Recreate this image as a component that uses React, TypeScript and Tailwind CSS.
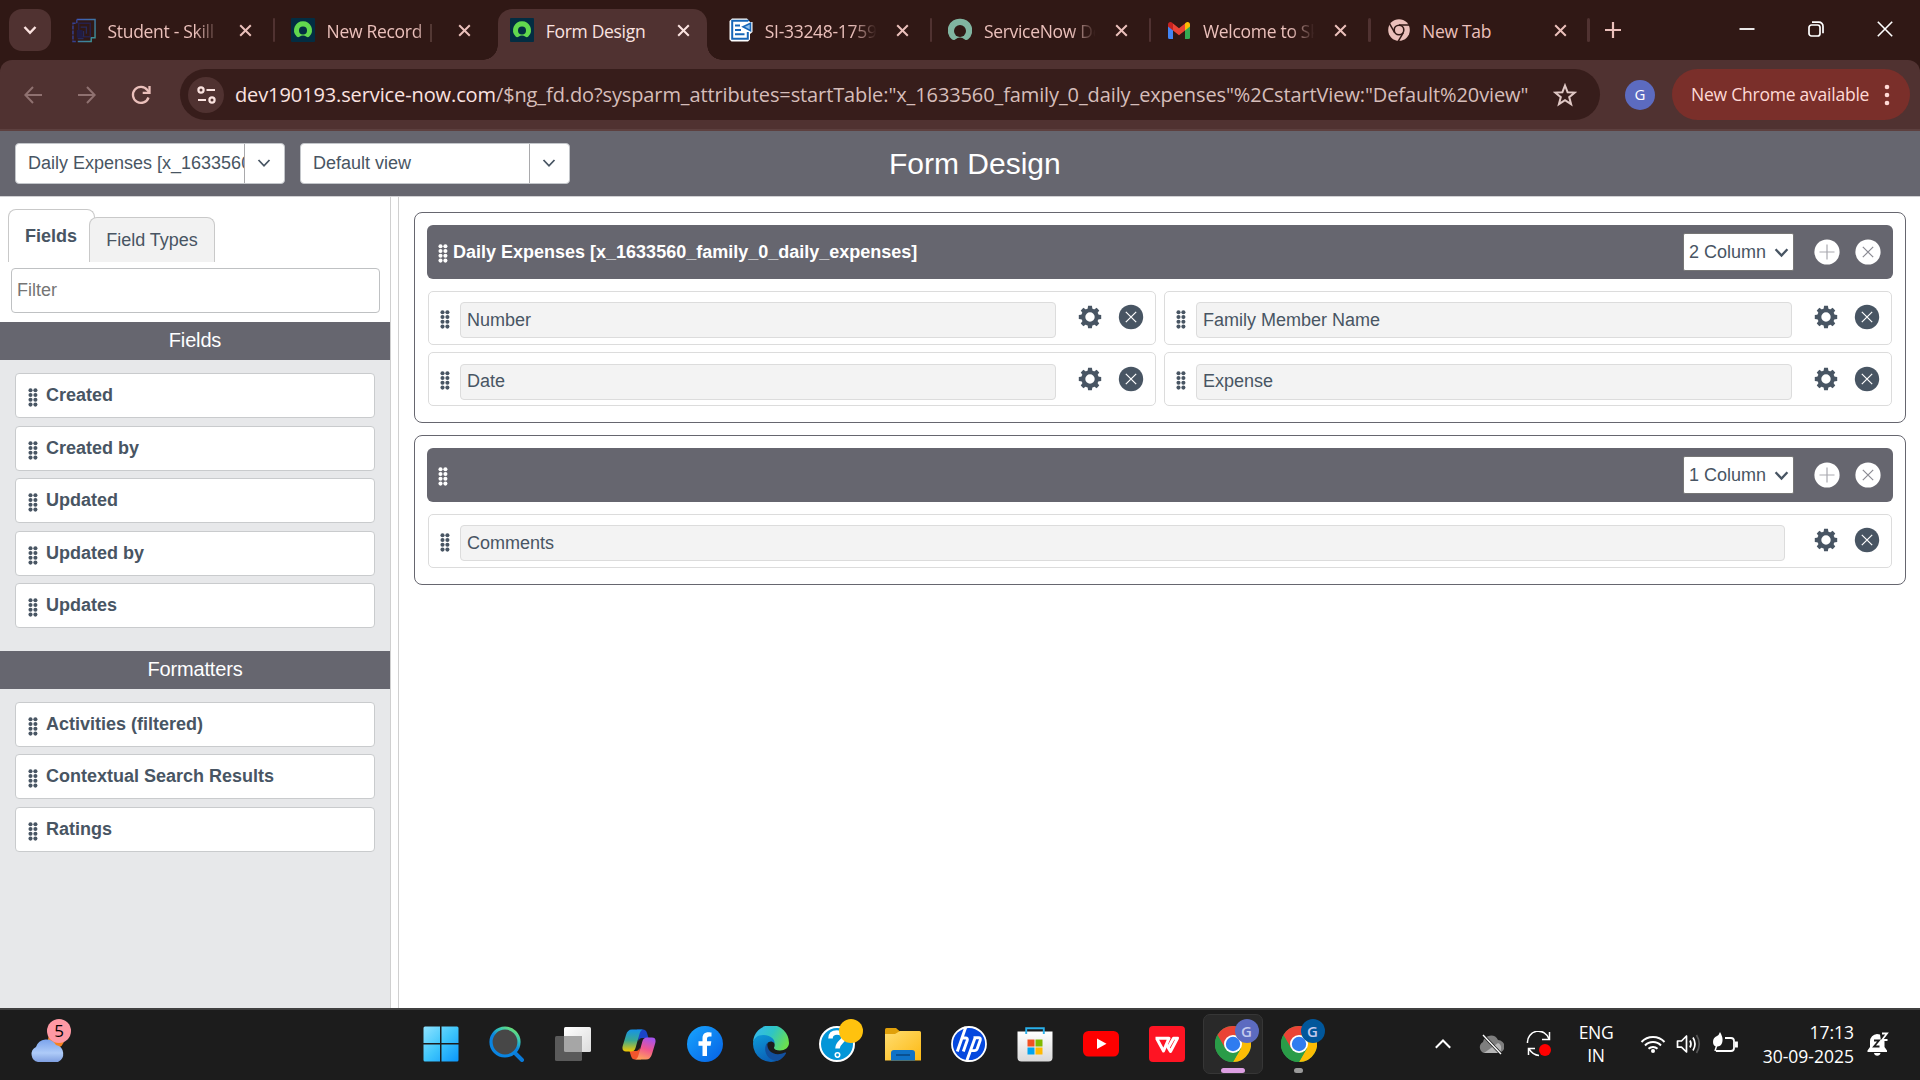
import React from "react";

const UI = "font-['Open_Sans','Noto_Sans',sans-serif]";

function DragHandle({ className = "" }: { className?: string }) {
  return (
    <svg width="10" height="19" viewBox="0 0 10 19" fill="currentColor" className={"shrink-0 " + className}>
      {[2.2, 7, 11.8, 16.6].map((y) => (
        <g key={y}>
          <circle cx="2.5" cy={y} r="2.05" />
          <circle cx="7.4" cy={y} r="2.05" />
        </g>
      ))}
    </svg>
  );
}

function Chevron({ size = 14, stroke = 2 }: { size?: number; stroke?: number }) {
  return (
    <svg width={size} height={size} viewBox="0 0 14 14" fill="none" stroke="currentColor" strokeWidth={stroke}>
      <path d="M1.5 4 7 9.8 12.5 4" />
    </svg>
  );
}

function Gear() {
  return (
    <svg width="24" height="24" viewBox="-12 -12 24 24" className="shrink-0 text-[#485563]">
      <circle r="6.7" fill="none" stroke="currentColor" strokeWidth="4" />
      {[0, 45, 90, 135, 180, 225, 270, 315].map((a) => (
        <path key={a} d="M-2.5 -7.5 L-1.9 -11.2 H1.9 L2.5 -7.5Z" fill="currentColor" transform={`rotate(${a})`} />
      ))}
    </svg>
  );
}

function RemoveIcon({ light = false }: { light?: boolean }) {
  return (
    <svg width="26" height="26" viewBox="-13 -13 26 26" className="shrink-0">
      <circle r={light ? 12.6 : 12.2} fill={light ? "#fff" : "#485563"} />
      <path d="M-5.2 -5.2 5.2 5.2M5.2 -5.2-5.2 5.2" stroke={light ? "#8b8b93" : "#fff"} strokeWidth="1.2" />
    </svg>
  );
}

function AddIcon() {
  return (
    <svg width="26" height="26" viewBox="-13 -13 26 26" className="shrink-0">
      <circle r="12.6" fill="#fff" />
      <path d="M-7.5 0H7.5M0 -7.5V7.5" stroke="#a9a9b0" strokeWidth="1.2" />
    </svg>
  );
}

function ServiceNowFavicon() {
  return (
    <svg width="24" height="24" viewBox="0 0 24 24">
      <rect width="24" height="24" rx="1" fill="#032d42" />
      <path d="M12 3.2a9 9 0 0 0-6.300 15.400c.8.8 1.900.9 2.800.2a5.600 5.600 0 0 1 7 0c.9.7 2 .6 2.800-.2A9 9 0 0 0 12 3.200Z" fill="#62d84e" />
      <circle cx="12" cy="12.600" r="4" fill="#032d42" />
    </svg>
  );
}

function ServiceNowPlain() {
  return (
    <svg width="24" height="24" viewBox="0 0 24 24">
      <path d="M12 .8A11.600 11.600 0 0 0 3.800 21.200c1 .9 2.400 1 3.400.2a7.600 7.600 0 0 1 9.600 0c1 .8 2.400.7 3.400-.2A11.600 11.600 0 0 0 12 .8Z" fill="#81b5a1" />
      <circle cx="12" cy="13" r="6" fill="#301815" />
    </svg>
  );
}

function SkillFavicon() {
  return (
    <svg width="25" height="25" viewBox="0 0 25 25" fill="none">
      <defs>
        <linearGradient id="skill" x1="0" y1="0" x2="1" y2="1">
          <stop offset="0" stopColor="#3f58b8" />
          <stop offset="1" stopColor="#3d9490" />
        </linearGradient>
      </defs>
      <path d="M5 1H24V20H20V24H6" stroke="url(#skill)" strokeWidth="1.500" />
      <path d="M5 1V5H1V24H5" stroke="#35408f" strokeWidth="1.500" strokeDasharray="4 1.200" />
      <path d="M7 5H19V19H7V5Z" stroke="#26204a" strokeWidth="1.500" />
      <path d="M5 12H11V20H5Z" fill="#211c44" />
      <path d="M9 9H15V16M6 21h6M12 13v6" stroke="#262a5c" strokeWidth="1.400" />
    </svg>
  );
}

function DocFavicon() {
  return (
    <svg width="24" height="24" viewBox="0 0 24 24">
      <path d="M3 .5H18L21 4H23.500V14L21 16V21.500L19 23.500H2.500L.5 21.500V3Z" fill="#fff" />
      <path d="M19 3.200V2.800H3.200V20.800H18.800V14" fill="none" stroke="#1767b8" strokeWidth="2" />
      <path d="M6 7.500H11M6 12H12M6 16.300H15.500" stroke="#1767b8" strokeWidth="2" />
      <path d="M21.500 5.200V12.600L14 8.800Z" fill="#8fc0ee" stroke="#1767b8" strokeWidth="1.600" />
    </svg>
  );
}

function GmailFavicon() {
  return (
    <svg width="22" height="17" viewBox="0 0 22 17">
      <path d="M0 2V15.500A1.500 1.500 0 0 0 1.500 17H5V7.500L0 3.500Z" fill="#4285f4" />
      <path d="M17 17h3.500a1.500 1.500 0 0 0 1.500-1.500V2L17 7Z" fill="#34a853" />
      <path d="M17 1.500V8.500L22 4.500V2.400C22 .2 19.500-.7 18 .6Z" fill="#fbbc04" />
      <path d="M5 8.500V1.500L11 6.200 17 1.500V8.500L11 13.200Z" fill="#ea4335" />
      <path d="M0 2.400V4.500L5 8.500V1.500L4 .6C2.400-.7 0 .2 0 2.400Z" fill="#c5221f" />
    </svg>
  );
}

function ChromeMono() {
  return (
    <svg width="22" height="22" viewBox="-11 -11 22 22">
      <circle r="10.800" fill="#ebc0bb" />
      <circle r="5.600" fill="#301815" />
      <circle r="4" fill="#ebc0bb" />
      {[0, 120, 240].map((a) => (
        <path key={a} d="M0 -5H10" stroke="#301815" strokeWidth="1.500" transform={`rotate(${a})`} />
      ))}
    </svg>
  );
}

function CloseX() {
  return (
    <svg width="13" height="13" viewBox="0 0 13 13" stroke="currentColor" strokeWidth="2" className="absolute left-[184px] top-6">
      <path d="M1.200 1.200 11.800 11.800M11.800 1.200 1.200 11.800" />
    </svg>
  );
}

type Tab = { title: string; icon: React.ReactNode; active?: boolean; divider?: boolean; fade?: boolean };

const tabs: Tab[] = [
  { title: "Student - Skill", icon: <SkillFavicon />, divider: true, fade: true },
  { title: "New Record | F", icon: <ServiceNowFavicon />, fade: true },
  { title: "Form Design", icon: <ServiceNowFavicon />, active: true },
  { title: "SI-33248-1759", icon: <DocFavicon />, divider: true, fade: true },
  { title: "ServiceNow De", icon: <ServiceNowPlain />, divider: true, fade: true },
  { title: "Welcome to Sk", icon: <GmailFavicon />, divider: true, fade: true },
  { title: "New Tab", icon: <ChromeMono />, divider: true },
];

function BrowserTab({ tab }: { tab: Tab }) {
  return (
    <div className={"relative flex h-[60px] w-[219.100px] shrink-0 items-center " + (tab.active ? "text-[#fbe3e0]" : "text-[#ebc0bb]")}>
      {tab.active && (
        <>
          <div className="absolute bottom-0 left-[5px] right-[5px] top-[9px] rounded-t-[14px] bg-[#503231]" />
          <div className="absolute bottom-0 left-[-10px] size-[15px] bg-[radial-gradient(circle_at_0_0,transparent_14.500px,#503231_15px)]" />
          <div className="absolute bottom-0 right-[-10px] size-[15px] bg-[radial-gradient(circle_at_100%_0,transparent_14.500px,#503231_15px)]" />
        </>
      )}
      <div className="relative ml-[17px] flex w-[24px] items-center justify-center">{tab.icon}</div>
      <div
        className={
          "relative ml-[11.500px] mt-[2px] w-[114px] overflow-hidden whitespace-nowrap text-[17.500px] tracking-[-0.300px] " +
          (tab.fade ? "[mask-image:linear-gradient(to_right,#000_76%,transparent_98%)]" : "")
        }
      >
        {tab.title}
      </div>
      <CloseX />
      {tab.divider && <div className="absolute -right-px top-[18px] h-6 w-[2.500px] rounded bg-[#503231]" />}
    </div>
  );
}

function TabStrip() {
  return (
    <div className={"flex h-[60px] items-center bg-[#301815] pl-[9px] " + UI}>
      <div className="mr-[4px] flex size-[42px] items-center justify-center rounded-[13px] bg-[#503231] text-[#fbe3e0]">
        <Chevron size={14} stroke={2.4} />
      </div>
      {tabs.map((t) => (
        <BrowserTab key={t.title} tab={t} />
      ))}
      <svg width="16" height="16" viewBox="0 0 16 16" stroke="#ebc0bb" strokeWidth="2.200" className="ml-[16px]">
        <path d="M8 0V16M0 8H16" />
      </svg>
      <div className="ml-auto flex items-center gap-[53px] pb-[2px] pr-[27px] text-white">
        <svg width="16" height="16" viewBox="0 0 16 16" stroke="currentColor" strokeWidth="1.800">
          <path d="M0.500 8H15.500" />
        </svg>
        <svg width="16" height="16" viewBox="0 0 16 16" fill="none" stroke="currentColor" strokeWidth="1.700">
          <rect x="1" y="4" width="11" height="11" rx="2.500" />
          <path d="M4 1.200h7a4 4 0 0 1 4 4v7" />
        </svg>
        <svg width="16" height="16" viewBox="0 0 16 16" stroke="currentColor" strokeWidth="1.600">
          <path d="M.8.8 15.200 15.200M15.200.8.8 15.200" />
        </svg>
      </div>
    </div>
  );
}

function Toolbar() {
  return (
    <div className="bg-[#301815]">
      <div className={"flex h-[71px] items-center rounded-t-[12px] border-b-2 border-[#5d403f] bg-[#503231] pl-[24px] pr-[10px] " + UI}>
        <svg width="18" height="18" viewBox="0 0 18 18" fill="none" stroke="#8f7170" strokeWidth="2">
          <path d="M18 9H1.500M9 1 1.300 9 9 17" />
        </svg>
        <svg width="18" height="18" viewBox="0 0 18 18" fill="none" stroke="#8f7170" strokeWidth="2" className="ml-9">
          <path d="M0 9H16.500M9 1 16.700 9 9 17" />
        </svg>
        <svg width="20" height="20" viewBox="0 0 20 20" fill="none" stroke="#ebc0bb" strokeWidth="2.300" className="ml-[35px]">
          <path d="M17.500 12.500A8 8 0 1 1 16.300 5L18.200 7.200" />
          <path d="M18.500 1V7.800H11.700" />
        </svg>
        <div className="ml-[29px] flex h-[51px] w-[1420px] items-center rounded-full bg-[#371d1b] pl-2 pr-[23px]">
          <div className="flex size-9 shrink-0 items-center justify-center rounded-full bg-[#503231]">
            <svg width="19" height="18" viewBox="0 0 19 18" fill="none" stroke="#fbe3e0" strokeWidth="2.200">
              <circle cx="4" cy="4" r="2.600" />
              <path d="M9.500 4H18M1 14H9" />
              <circle cx="15" cy="14" r="2.600" />
            </svg>
          </div>
          <div className="ml-[11px] w-[1297px] shrink-0 whitespace-nowrap text-[20px] leading-7 tracking-[-0.112px] text-[#d6bdba]">
            <span className="text-[#fbe3e0]">dev190193.service-now.com</span>
            /$ng_fd.do?sysparm_attributes=startTable:"x_1633560_family_0_daily_expenses"%2CstartView:"Default%20view"
          </div>
          <svg width="24" height="24" viewBox="0 0 24 24" fill="none" stroke="#e0c8c5" strokeWidth="2" className="ml-auto shrink-0">
            <path d="M12 2.500 14.600 9.200 21.800 9.600 16.200 14.100 18.100 21.200 12 17.200 5.900 21.200 7.800 14.100 2.200 9.600 9.400 9.200Z" />
          </svg>
        </div>
        <div className="ml-[25px] flex size-[30px] items-center justify-center rounded-full bg-[#5c6bc0] text-[15px] text-white">G</div>
        <div className="ml-auto flex h-[51px] w-[238px] items-center rounded-full bg-[#7a2f2a] pl-[19px] text-[17.500px] text-[#ffdad6]">
          <span className="w-[184px] whitespace-nowrap tracking-[-0.230px]">New Chrome available</span>
          <svg width="6" height="22" viewBox="0 0 6 22" fill="currentColor" className="ml-[9px]">
            <circle cx="3" cy="3" r="2.300" />
            <circle cx="3" cy="11" r="2.300" />
            <circle cx="3" cy="19" r="2.300" />
          </svg>
        </div>
      </div>
    </div>
  );
}

function HeaderSelect({ label }: { label: string }) {
  return (
    <div className="flex h-[41px] w-[270px] rounded-[4px] border border-[#c3c6ca] bg-white text-[#485563]">
      <div className="w-[229px] overflow-hidden whitespace-nowrap border-r border-[#a9a9ac] pl-3 text-[18px] leading-[38px]">{label}</div>
      <div className="flex flex-1 items-center justify-center pb-px pr-px">
        <Chevron size={14} stroke={1.800} />
      </div>
    </div>
  );
}

function AppHeader() {
  return (
    <div className="flex h-[66px] items-center gap-[15px] border-b border-[#d0d0d3] bg-[#66666f] pl-[15px]">
      <HeaderSelect label="Daily Expenses [x_1633560" />
      <HeaderSelect label="Default view" />
      <div className="ml-[304px] text-[30px] leading-none text-white">Form Design</div>
    </div>
  );
}

function SideSection({ title, items }: { title: string; items: string[] }) {
  return (
    <>
      <div className="flex h-[38px] items-center justify-center bg-[#66666f] pb-[2px] text-[20px] tracking-[-0.150px] text-white">{title}</div>
      <div className="flex flex-col gap-[7.500px] px-[15px] pb-[22.500px] pt-[13px]">
        {items.map((item) => (
          <div
            key={item}
            className="flex h-[45px] items-center rounded-[4px] border border-[#c9cbcd] bg-white pl-3 text-[18px] font-bold text-[#485563]"
          >
            <DragHandle className="mt-[4px]" />
            <span className="ml-[8px]">{item}</span>
          </div>
        ))}
      </div>
    </>
  );
}

function Sidebar() {
  return (
    <div className="flex w-[391px] shrink-0 flex-col border-r border-[#d0d0d0] bg-[#e7e8ea] text-[#485563]">
      <div className="h-[125px] bg-white pt-3">
        <div className="flex h-[53px] items-end pl-2 text-[18px]">
          <div className="flex h-[53px] w-[87px] items-center justify-center rounded-t-[8px] border border-b-0 border-[#c9c9c9] bg-white pr-px font-bold">
            Fields
          </div>
          <div className="relative -ml-[6px] flex h-[45px] w-[126px] items-center justify-center rounded-t-[8px] border border-b-0 border-[#c9c9c9] bg-[#f2f2f2]">
            Field Types
          </div>
        </div>
        <div className="mx-[11px] mt-[6px] flex h-[45px] w-[369px] items-center rounded-[4px] border border-[#bfc1c3] pb-px pl-[5px] text-[18px] text-[#757575]">
          Filter
        </div>
      </div>
      <SideSection title="Fields" items={["Created", "Created by", "Updated", "Updated by", "Updates"]} />
      <SideSection title="Formatters" items={["Activities (filtered)", "Contextual Search Results", "Ratings"]} />
    </div>
  );
}

function FieldRow({ label, wide = false, low = false }: { label: string; wide?: boolean; low?: boolean }) {
  return (
    <div className="flex h-[54px] items-start rounded-[5px] border border-[#dcdcdc] bg-white pl-[11px] text-[#485563]">
      <DragHandle className="mt-[18px]" />
      <div
        className={
          "ml-[10px] flex h-9 items-center rounded-[4px] border border-[#dcdcdc] bg-[#f3f3f3] pl-[6px] text-[18px] " +
          (low ? "mt-[11px] pb-[2px] " : "mt-[10px] ") +
          (wide ? "w-[1325px]" : "w-[596px]")
        }
      >
        {label}
      </div>
      <div className={"ml-auto flex items-center gap-[16px] pr-[11px] " + (low ? "mt-[13px]" : "mt-[12px]")}>
        <Gear />
        <RemoveIcon />
      </div>
    </div>
  );
}

function SectionCard({ title, columns, fields }: { title: string; columns: number; fields: string[] }) {
  const two = columns === 2;
  return (
    <div className="rounded-[8px] border border-[#66666f] bg-white px-3 pb-4 pt-3">
      <div className="flex h-[54px] items-center rounded-[6px] bg-[#66666f] pl-[11px] pr-[12px] text-white">
        <DragHandle className="mt-[3px]" />
        <div className="ml-[5px] text-[18px] font-bold">{title}</div>
        <div className="ml-auto flex h-[38px] w-[111px] items-center justify-between rounded-[2px] border border-[#767676] bg-white pl-[5px] pr-[4px] text-[18px] text-[#485563]">
          <span className="whitespace-nowrap">{columns} Column</span>
          <Chevron size={15} stroke={2.2} />
        </div>
        <div className="ml-[20px] flex gap-[15px]">
          <AddIcon />
          <RemoveIcon light />
        </div>
      </div>
      <div className={"mt-3 grid gap-x-2 gap-y-[7px] px-px " + (two ? "grid-cols-2" : "grid-cols-1")}>
        {fields.map((f, i) => (
          <FieldRow key={f} label={f} wide={!two} low={i > 1} />
        ))}
      </div>
    </div>
  );
}

function ChromeIcon() {
  return (
    <svg width="36" height="36" viewBox="-18 -18 36 36">
      <circle r="18" fill="#34a853" />
      <path d="M-15.600 -9A18 18 0 0 1 15.600 -9L0 -9-7.800 4.500Z" fill="#ea4335" />
      <path d="M15.600 -9A18 18 0 0 1 0 18L7.800 4.500 0 -9Z" fill="#fbbc05" />
      <path d="M-15.600 -9-7.800 4.500 0 9 7.800 4.500 0 18A18 18 0 0 1-15.600 -9Z" fill="#2a9c48" />
      <circle r="9" fill="#fff" />
      <circle r="7.200" fill="#2f7cf0" />
    </svg>
  );
}

function WindowsIcon() {
  return (
    <svg width="36" height="36" viewBox="0 0 36 36">
      <defs>
        <linearGradient id="win" x1="0" y1="0" x2="1" y2="1">
          <stop offset="0" stopColor="#8fe3ff" />
          <stop offset=".5" stopColor="#3fc6fb" />
          <stop offset="1" stopColor="#0a96fb" />
        </linearGradient>
      </defs>
      <path d="M2 .5H17V17H.5V2Q.5.5 2 .5ZM18.500.5H34Q35.500.5 35.500 2V17H18.500ZM.5 18.500H17V35.500H2Q.5 35.500.5 34ZM18.500 18.500H35.500V34Q35.500 35.500 34 35.500H18.500Z" fill="url(#win)" />
    </svg>
  );
}

function SearchIcon() {
  return (
    <svg width="36" height="36" viewBox="0 0 36 36" fill="none">
      <defs>
        <linearGradient id="srch" x1=".2" y1="1" x2=".8" y2="0">
          <stop offset=".5" stopColor="#0a84e0" />
          <stop offset=".75" stopColor="#35c5b8" />
          <stop offset="1" stopColor="#6fe070" />
        </linearGradient>
      </defs>
      <path d="M25 26 33 34" stroke="#0a7ad8" strokeWidth="4" strokeLinecap="round" />
      <circle cx="16" cy="16" r="14" fill="#474747" stroke="url(#srch)" strokeWidth="3.200" />
    </svg>
  );
}

function TaskViewIcon() {
  return (
    <svg width="36" height="34" viewBox="0 0 36 34">
      <defs>
        <linearGradient id="tv" x1="0" y1="0" x2="1" y2="1">
          <stop offset="0" stopColor="#ffffff" />
          <stop offset="1" stopColor="#dcdcdc" />
        </linearGradient>
      </defs>
      <rect x="9" y="0" width="27" height="25" rx="1.500" fill="url(#tv)" />
      <rect x="0" y="9" width="27" height="25" rx="1.500" fill="#5a5a5a" />
      <path d="M9 9H27V25H10.500Q9 25 9 23.500Z" fill="#a6a6a6" />
    </svg>
  );
}

function CopilotIcon() {
  return (
    <svg width="34" height="31" viewBox="0 0 34 31">
      <defs>
        <linearGradient id="cp1" x1="0" y1="0" x2="0" y2="1">
          <stop offset="0" stopColor="#1593e8" />
          <stop offset=".5" stopColor="#3aa991" />
          <stop offset="1" stopColor="#f2c800" />
        </linearGradient>
        <linearGradient id="cp2" x1=".6" y1="0" x2=".3" y2="1">
          <stop offset="0" stopColor="#a653ec" />
          <stop offset=".5" stopColor="#f0568e" />
          <stop offset="1" stopColor="#ffa35c" />
        </linearGradient>
      </defs>
      <path d="M15 .5H21Q24 .5 25 4L26.500 9H20Q17.500 9 16.500 12Z" fill="#1b45c8" />
      <path d="M19 30.500H13Q10 30.500 9 27L7.500 22H14Q16.500 22 17.500 19Z" fill="#f2552c" />
      <path d="M10 .5H21Q18.500 1 17.500 5L13.500 19Q12.500 22.500 9 22.500H4Q-.5 22.500.7 17L4 6Q5.500.5 10 .5Z" fill="url(#cp1)" />
      <path d="M24 30.500H13Q15.500 30 16.500 26L20.500 12Q21.500 8.500 25 8.500H30Q34.500 8.500 33.300 14L30 25Q28.500 30.500 24 30.500Z" fill="url(#cp2)" />
    </svg>
  );
}

function FacebookIcon() {
  return (
    <svg width="36" height="36" viewBox="0 0 36 36">
      <defs>
        <linearGradient id="fb" x1="0" y1="0" x2="1" y2="1">
          <stop offset="0" stopColor="#18a5fe" />
          <stop offset="1" stopColor="#0560e4" />
        </linearGradient>
      </defs>
      <circle cx="18" cy="18" r="18" fill="url(#fb)" />
      <path d="M15.500 30V19.800H11.500V15.200H15.500V12.300C15.500 8.300 17.800 6.300 21.300 6.300 22.800 6.300 24.500 6.600 24.500 6.600V10.500H22.500C20.600 10.500 20 11.600 20 12.800V15.200H24.300L23.600 19.800H20V30Z" fill="#fff" />
    </svg>
  );
}

function EdgeIcon() {
  return (
    <svg width="36" height="36" viewBox="0 0 36 36">
      <defs>
        <linearGradient id="eg1" x1="0" y1=".2" x2="1" y2=".6">
          <stop offset="0" stopColor="#35b8f1" />
          <stop offset=".5" stopColor="#2fc5c4" />
          <stop offset="1" stopColor="#6be04e" />
        </linearGradient>
        <linearGradient id="eg2" x1="0" y1="0" x2=".4" y2="1">
          <stop offset="0" stopColor="#0d9bd8" />
          <stop offset="1" stopColor="#0b63b8" />
        </linearGradient>
      </defs>
      <path d="M0 17A18 18 0 0 1 36 17C36 21.500 32 24.500 27 24.500 23 24.500 20.700 23 21 21.500 22.500 19.500 22 13.500 15 11 8 9 1.500 12 0 17Z" fill="url(#eg1)" />
      <path d="M0 18C0 12 5 8.600 11 9 17 9.400 22 13 21.500 17 17 13 12.500 17 13 23 13.500 29 19 34 25 34.500A18 18 0 0 1 0 18Z" fill="url(#eg2)" />
      <path d="M14.500 16.500C10 21 11.500 34 24.500 35A18 18 0 0 0 33 27.500C33.300 26.500 32.500 26.200 31.800 26.600 22 31 13 25.500 14.500 16.500Z" fill="#12509e" />
    </svg>
  );
}

function HelpIcon() {
  return (
    <div className="relative flex size-9 items-center justify-center rounded-full border-[2px] border-white bg-[#0396d8]">
      <svg width="18" height="28" viewBox="0 0 18 28" fill="none" stroke="#fff" strokeWidth="4.500">
        <path d="M2.500 8.500C2.500 4 5.500 2.500 9 2.500S15.500 4.500 15.500 8 9.500 12.500 9.500 18.500" />
        <circle cx="9.500" cy="25" r=".8" />
      </svg>
      <div className="absolute -right-[10px] -top-[9px] size-6 rounded-full bg-[#ffc20e]" />
    </div>
  );
}

function ExplorerIcon() {
  return (
    <svg width="36" height="33" viewBox="0 0 36 33">
      <defs>
        <linearGradient id="ex" x1="0" y1="0" x2="1" y2="1">
          <stop offset="0" stopColor="#ffdd70" />
          <stop offset="1" stopColor="#fdb913" />
        </linearGradient>
      </defs>
      <path d="M0 1.500Q0 0 1.500 0H11L15 3.500V8H0Z" fill="#e0a00a" />
      <path d="M0 6H10L15 3H34.500Q36 3 36 4.500V32.500H0Z" fill="url(#ex)" />
      <path d="M6 32.500V25Q6 22 9 22H27Q30 22 30 25V32.500Z" fill="#0f72c6" />
      <path d="M11 27H25" stroke="#0a4c8c" strokeWidth="1.800" />
    </svg>
  );
}

function HpIcon() {
  return (
    <svg width="36" height="36" viewBox="0 0 36 36" fill="none">
      <circle cx="18" cy="18" r="17" fill="#0548de" stroke="#fff" strokeWidth="1.800" />
      <path d="M14.800 1 6.300 25.500M10.500 12H14.500Q17 12 16.200 14.500L12.300 25.500" stroke="#fff" strokeWidth="2.900" />
      <path d="M24 12 15.500 35.500M22.500 11.800H27.500Q30 11.800 29.200 14.200L26.300 22.500Q25.500 24.600 23.300 24.600H20" stroke="#fff" strokeWidth="2.900" />
    </svg>
  );
}

function StoreIcon() {
  return (
    <svg width="36" height="36" viewBox="0 0 36 36">
      <defs>
        <linearGradient id="st" x1="0" y1="0" x2="0" y2="1">
          <stop offset="0" stopColor="#fff" />
          <stop offset="1" stopColor="#d8d8d8" />
        </linearGradient>
      </defs>
      <path d="M.5 5.500H35.500V31.500Q35.500 35.500 31.500 35.500H4.500Q.5 35.500.5 31.500Z" fill="url(#st)" />
      <path d="M9.200 8V2.200H26.800V8" fill="none" stroke="#28b0ea" strokeWidth="1.900" />
      <path d="M10.500 13.500H17.500V20.500H10.500Z" fill="#f25022" />
      <path d="M18.500 13.500H25.500V20.500H18.500Z" fill="#7fba00" />
      <path d="M10.500 21.500H17.500V28.500H10.500Z" fill="#00a4ef" />
      <path d="M18.500 21.500H25.500V28.500H18.500Z" fill="#ffb900" />
    </svg>
  );
}

function YoutubeIcon() {
  return (
    <svg width="36" height="26" viewBox="0 0 36 26">
      <rect width="36" height="25.500" rx="5.500" fill="#f00" />
      <path d="M14 7.500 23.500 12.800 14 18Z" fill="#fff" />
    </svg>
  );
}

function WpsIcon() {
  return (
    <svg width="36" height="36" viewBox="0 0 36 36" fill="none">
      <rect width="36" height="36" rx="4" fill="#fe1423" />
      <path d="M6.500 12.200H20L14.500 25 8 13" stroke="#fff" strokeWidth="3" strokeLinejoin="round" />
      <path d="M17 18 21.500 25.500 28.500 12.200H24.500L19.500 21" stroke="#fff" strokeWidth="3" strokeLinejoin="round" />
    </svg>
  );
}

function ProfileChrome({ color }: { color: string }) {
  return (
    <div className="relative">
      <ChromeIcon />
      <div className={"absolute -right-2 -top-[7px] flex size-6 items-center justify-center rounded-full text-[15px] font-semibold text-[#c3caee] " + color}>G</div>
    </div>
  );
}

function Taskbar() {
  const pinned = [
    <WindowsIcon />,
    <SearchIcon />,
    <TaskViewIcon />,
    <CopilotIcon />,
    <FacebookIcon />,
    <EdgeIcon />,
    <HelpIcon />,
    <ExplorerIcon />,
    <HpIcon />,
    <StoreIcon />,
    <YoutubeIcon />,
    <WpsIcon />,
  ];
  return (
    <div className={"flex h-[72px] items-center border-t-2 border-[#404040] bg-[#1c1c1c] pb-[2px] text-white " + UI}>
      <div className="relative ml-[30px] mt-[11px] h-[26px] w-[377.500px] shrink-0">
        <svg width="36" height="32" viewBox="0 0 36 32" className="-mt-[6px]">
          <defs>
            <linearGradient id="cl" x1="0" y1="0" x2="0" y2="1">
              <stop offset="0" stopColor="#7ba3ec" />
              <stop offset=".6" stopColor="#aecbf8" />
              <stop offset="1" stopColor="#7f9fe0" />
            </linearGradient>
          </defs>
          <circle cx="26" cy="9" r="8" fill="#f58220" />
          <path d="M8 31A8 8 0 0 1 6 16 11 11 0 0 1 26 14 9 9 0 0 1 28 31Z" fill="url(#cl)" />
        </svg>
        <div className="absolute left-[17px] top-[-18px] flex size-6 items-center justify-center rounded-full bg-[#ff99a4] text-[17px] leading-none text-black">5</div>
      </div>
      {pinned.map((icon, i) => (
        <div key={i} className="flex w-[66px] shrink-0 items-center justify-center">
          {icon}
        </div>
      ))}
      <div className="relative flex w-[66px] shrink-0 justify-center">
        <div className="absolute -top-3 left-[3px] size-[60px] rounded-[7px] border border-[#363636] bg-[#292929]" />
        <ProfileChrome color="bg-[#5c6bc0]" />
        <div className="absolute -bottom-[11px] h-[5px] w-6 rounded-full bg-[#dd9fe2]" />
      </div>
      <div className="relative flex w-[66px] shrink-0 justify-center">
        <ProfileChrome color="bg-[#01579b]" />
        <div className="absolute -bottom-[11px] h-[5px] w-[9px] rounded-full bg-[#9a9a9a]" />
      </div>
      <div className="ml-[103.500px] flex w-[455px] shrink-0 items-center">
        <svg width="16" height="10" viewBox="0 0 16 10" fill="none" stroke="#fff" strokeWidth="2">
          <path d="M.8 8.800 8 1.500 15.200 8.800" />
        </svg>
        <svg width="26" height="22" viewBox="0 0 26 22" className="ml-[27px]">
          <path d="M6 20A6 6 0 0 1 5 9 8 8 0 0 1 20 7 6.500 6.500 0 0 1 20 20Z" fill="#7e7e7e" />
          <path d="M6 20 20 10A5.500 5.500 0 0 1 20 20Z" fill="#b5b5b5" />
          <path d="M5 2 23 21" stroke="#1c1c1c" strokeWidth="3" />
          <path d="M5 2 23 21" stroke="#fff" strokeWidth="1.400" />
        </svg>
        <svg width="26" height="26" viewBox="0 0 26 26" fill="none" stroke="#fff" strokeWidth="1.500" className="ml-[22px]">
          <path d="M1.500 12A11 11 0 0 1 23 8M23.500 1V8.500H16M2.500 24V17.500H9M3 18Q7 24 13 24.500" />
          <circle cx="19" cy="19" r="6" fill="#f00" stroke="none" />
        </svg>
        <div className="ml-[19px] w-[50px] text-center text-[17.500px] leading-[23px] tracking-[-0.400px]">
          ENG
          <br />
          IN
        </div>
        <svg width="26" height="20" viewBox="0 0 26 20" fill="none" stroke="#fff" strokeWidth="2" className="ml-[19px]">
          <path d="M1.500 8A16 16 0 0 1 24.500 8M5 11.500A11 11 0 0 1 21 11.500M8.500 14.800A6.300 6.300 0 0 1 17.500 14.800" />
          <circle cx="13" cy="17" r="2" fill="#fff" stroke="none" />
        </svg>
        <svg width="26" height="20" viewBox="0 0 26 20" fill="none" stroke="#fff" strokeWidth="1.700" className="ml-[10px]">
          <path d="M1.500 7H5.500L10.500 2V18L5.500 13.200H1.500Z" strokeLinejoin="round" />
          <path d="M14 6.500Q16 10 14 13.500M17 3.500Q21 10 17 16.500" />
          <path d="M20.500 1Q26 10 20.500 19" stroke="#555" />
        </svg>
        <svg width="26" height="22" viewBox="0 0 26 22" fill="none" stroke="#fff" strokeWidth="1.800" className="-mt-[3px] ml-[10px]">
          <path d="M13 6H19Q22 6 22 9V16Q22 19 19 19H4" />
          <path d="M23 10.500H25V14.500H23" fill="#fff" />
          <path d="M8 0Q11 5 10.500 9 10 14 5.500 14.500 1 14.500 1 10 1 5.500 5 4 7 3 8 0Z" fill="#fff" stroke="none" />
          <path d="M6 9 3 19" strokeWidth="1.500" />
        </svg>
        <div className="ml-auto whitespace-nowrap text-right text-[17.500px] leading-[24px] tracking-[0px]">
          17:13
          <br />
          30-09-2025
        </div>
        <svg width="23" height="26" viewBox="0 0 23 26" className="ml-[13px]">
          <path d="M10 3A7.500 7.500 0 0 0 3 10.500V16L.5 19.500V21H20V19.500L17.500 16V10.500A7.500 7.500 0 0 0 10 3ZM7 22H13.500A3.300 3.300 0 0 1 7 22Z" fill="#fff" />
          <path d="M12.500 0H23V10H14Z" fill="#1c1c1c" />
          <path d="M7 9.500H12L7 15.500H12.500" fill="none" stroke="#1c1c1c" strokeWidth="1.800" />
          <path d="M15 2.500H20L15 9H20.500" fill="none" stroke="#fff" strokeWidth="1.800" />
        </svg>
      </div>
    </div>
  );
}

export default function App() {
  return (
    <div className="flex h-[1080px] w-[1920px] flex-col overflow-hidden bg-white">
      <TabStrip />
      <Toolbar />
      <div className="flex min-h-0 flex-1 flex-col font-['Liberation_Sans',Arial,sans-serif]">
        <AppHeader />
        <div className="flex min-h-0 flex-1">
          <Sidebar />
          <div className="ml-[7px] flex flex-1 flex-col gap-3 border-l border-[#d0d0d0] py-[15px] pl-[15px] pr-[14px]">
            <SectionCard
              title="Daily Expenses [x_1633560_family_0_daily_expenses]"
              columns={2}
              fields={["Number", "Family Member Name", "Date", "Expense"]}
            />
            <SectionCard title="" columns={1} fields={["Comments"]} />
          </div>
        </div>
      </div>
      <Taskbar />
    </div>
  );
}
